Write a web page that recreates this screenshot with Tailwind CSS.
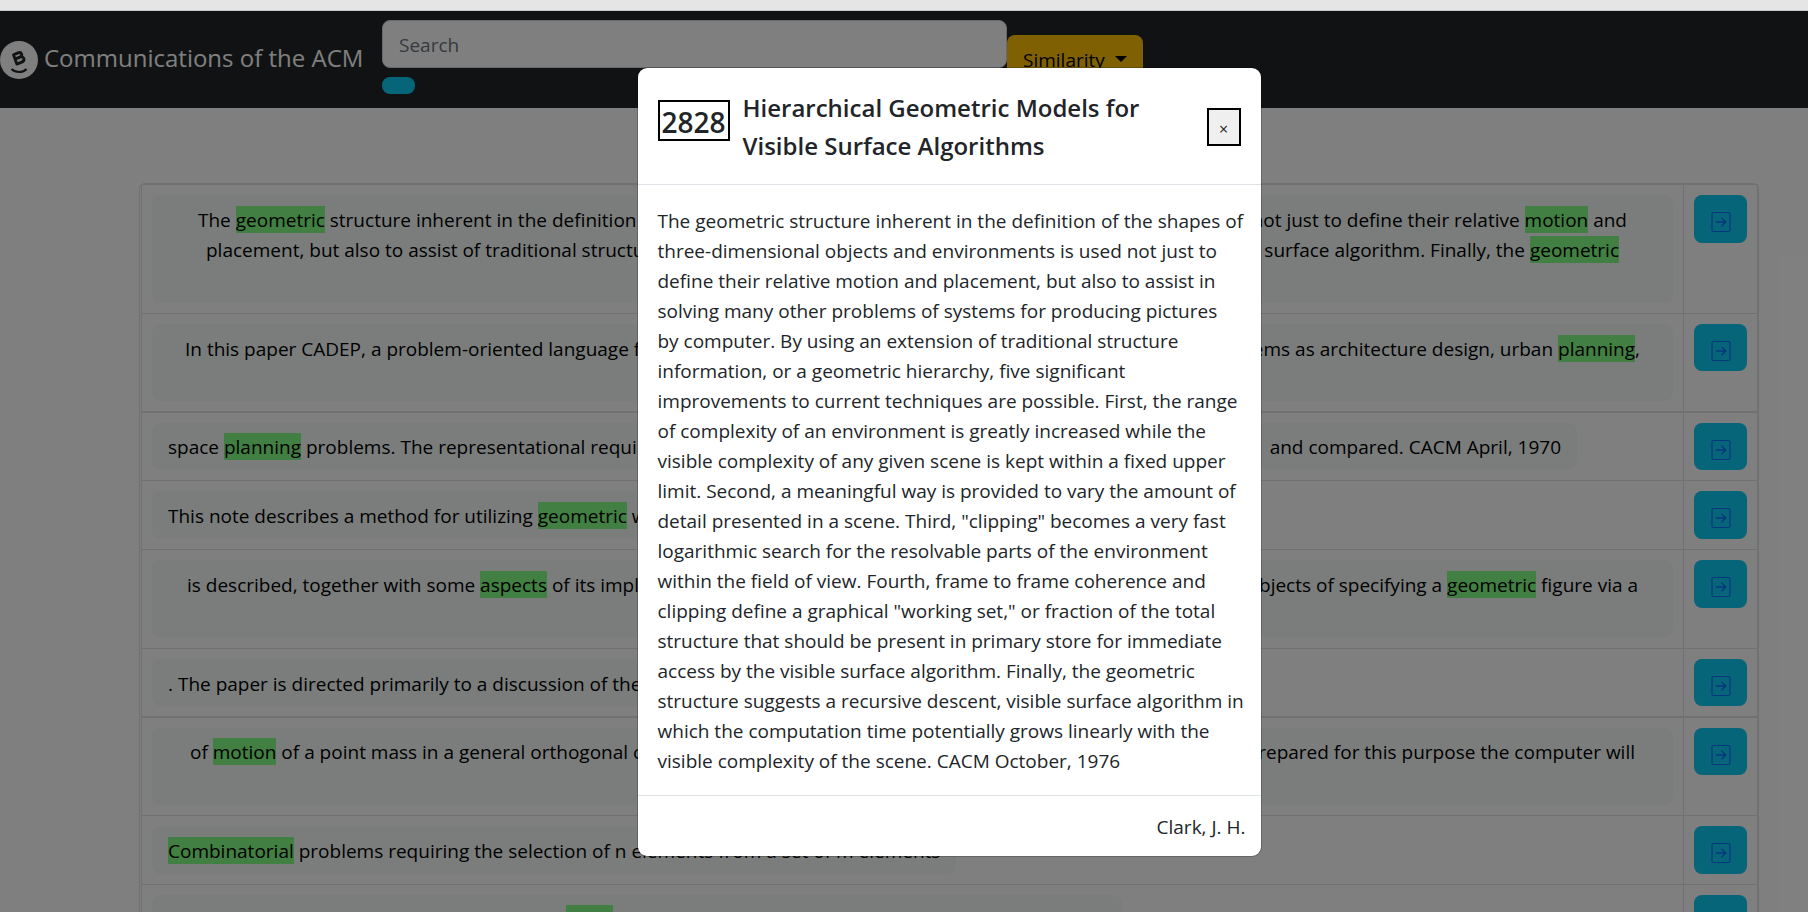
<!DOCTYPE html>
<html lang="en">
<head>
<meta charset="utf-8">
<title>Communications of the ACM</title>
<script src="https://cdn.jsdelivr.net/npm/@tailwindcss/browser@4"></script>
</head>
<body class="flex h-screen flex-col overflow-hidden bg-white font-['Open_Sans','Noto_Sans',sans-serif] text-[19px] leading-[30px] text-[#212529]">

<svg class="hidden" aria-hidden="true">
  <symbol id="open" viewBox="0 0 20 22">
    <rect x="1" y="1.5" width="18" height="19" rx="1.5" fill="none" stroke="#0d6efd" stroke-width="1.2"/>
    <path d="M5.5 11h9M11 7.2l3.8 3.8-3.8 3.8" fill="none" stroke="#0d6efd" stroke-width="1.4" stroke-linecap="round" stroke-linejoin="round"/>
  </symbol>
</svg>

<div class="h-[11px] shrink-0 border-b border-[#c3cbcb] bg-[#e5e5e5]"></div>

<div class="relative min-h-0 flex-1 overflow-hidden">
  <nav class="flex h-[97px] items-start bg-[#212529]">
    <a href="#" class="flex w-[382px] shrink-0 items-center gap-1.5 pt-[30px] text-[24px] leading-[34px] whitespace-nowrap text-white">
      <svg class="size-[38px] shrink-0" viewBox="0 0 38 38" aria-hidden="true">
        <circle cx="19" cy="19" r="19" fill="#fff"/>
        <g fill="none" stroke="#212529">
          <path d="M13.500 13.800l4.500-1.900c3.800-1.400 5.200 2.800 1.800 4.200l-4.300 1.800 4.300-1.800c4.300-1.600 5.800 3.400 2 5l-5 2z" stroke-width="2.800" stroke-linejoin="round"/>
          <path d="M11.500 28c4 4 11.500 4 15 0" stroke-width="2.200"/>
        </g>
      </svg>
      <span class="pb-1">Communications of the ACM</span>
    </a>
    <form class="flex min-w-0 items-start">
      <div class="flex flex-col items-start gap-[9px] pt-[9px]">
        <input type="search" aria-label="Search" placeholder="Search" class="h-12 w-[625px] rounded-[8px] border border-[#ced4da] bg-white px-4 pt-0.5 placeholder:text-[#6c757d]">
        <button type="submit" aria-label="Submit search" class="h-[17px] w-[33px] rounded-[8px] bg-[#0dcaf0]"></button>
      </div>
      <button type="button" class="mt-6 flex h-12 items-center gap-2.5 rounded-[8px] bg-[#ffc107] px-4 text-black">
        <span class="pt-0.5">Similarity</span>
        <svg class="h-[6px] w-3" viewBox="0 0 12 6" aria-hidden="true"><path d="M0 0h12L6 6z"/></svg>
      </button>
    </form>
  </nav>

  <main class="mt-[75px] mr-[49px] ml-[139px] rounded-[6px] border border-[#dee2e6] pl-px">
    <table class="w-full border-collapse text-black">
      <tbody class="[&_td]:border [&_td]:border-[#dee2e6] [&_td]:p-[10px] [&_td]:align-top [&_mark]:bg-[#82ff84] [&_mark]:pt-px [&_mark]:text-black">
        <tr>
          <td>
            <div class="h-[108px] rounded-[8px] bg-[#f5fbf9] pt-[10px] whitespace-nowrap">
              <div class="flex justify-between px-[46px]"><span>The <mark>geometric</mark> structure inherent in the definition</span><span>not just to define their relative <mark>motion</mark> and</span></div>
              <div class="flex justify-between px-[54px]"><span>placement, but also to assist of traditional structure</span><span>surface algorithm. Finally, the <mark>geometric</mark></span></div>
            </div>
          </td>
          <td class="w-[74px]"><button type="button" aria-label="Open document" class="flex h-12 w-[53px] items-center justify-center rounded-[8px] bg-[#0dcaf0] pt-1.5"><svg class="h-[22px] w-5"><use href="#open"/></svg></button></td>
        </tr>
        <tr>
          <td>
            <div class="flex h-[77px] justify-between rounded-[8px] bg-[#f5fbf9] px-[33px] pt-[10px] whitespace-nowrap"><span>In this paper CADEP, a problem-oriented language for</span><span>problems as architecture design, urban <mark>planning</mark>,</span></div>
          </td>
          <td><button type="button" aria-label="Open document" class="flex h-[47px] w-[53px] items-center justify-center rounded-[8px] bg-[#0dcaf0] pt-1.5"><svg class="h-[22px] w-5"><use href="#open"/></svg></button></td>
        </tr>
        <tr class="[&>td]:border-t-2!">
          <td>
            <div class="mr-24 flex h-[47px] justify-between rounded-[8px] bg-[#f5fbf9] px-4 pt-[9px] whitespace-nowrap"><span>space <mark>planning</mark> problems. The representational requirements</span><span>and compared. CACM April, 1970</span></div>
          </td>
          <td><button type="button" aria-label="Open document" class="flex h-[47px] w-[53px] items-center justify-center rounded-[8px] bg-[#0dcaf0] pt-1.5"><svg class="h-[22px] w-5"><use href="#open"/></svg></button></td>
        </tr>
        <tr>
          <td>
            <div class="h-12 w-fit rounded-[8px] bg-[#f5fbf9] px-4 pt-[10px] whitespace-nowrap">This note describes a method for utilizing <mark>geometric</mark> with</div>
          </td>
          <td><button type="button" aria-label="Open document" class="flex h-12 w-[53px] items-center justify-center rounded-[8px] bg-[#0dcaf0] pt-1.5"><svg class="h-[22px] w-5"><use href="#open"/></svg></button></td>
        </tr>
        <tr>
          <td>
            <div class="flex h-[78px] justify-between rounded-[8px] bg-[#f5fbf9] px-[35px] pt-[10px] whitespace-nowrap"><span>is described, together with some <mark>aspects</mark> of its implementation</span><span>objects of specifying a <mark>geometric</mark> figure via a</span></div>
          </td>
          <td><button type="button" aria-label="Open document" class="flex h-12 w-[53px] items-center justify-center rounded-[8px] bg-[#0dcaf0] pt-1.5"><svg class="h-[22px] w-5"><use href="#open"/></svg></button></td>
        </tr>
        <tr>
          <td>
            <div class="h-[47px] w-fit rounded-[8px] bg-[#f5fbf9] px-4 pt-[10px] whitespace-nowrap">. The paper is directed primarily to a discussion of the problem</div>
          </td>
          <td><button type="button" aria-label="Open document" class="flex h-[47px] w-[53px] items-center justify-center rounded-[8px] bg-[#0dcaf0] pt-1.5"><svg class="h-[22px] w-5"><use href="#open"/></svg></button></td>
        </tr>
        <tr class="[&>td]:border-t-2!">
          <td>
            <div class="flex h-[77px] justify-between rounded-[8px] bg-[#f5fbf9] px-[38px] pt-[9px] whitespace-nowrap"><span>of <mark>motion</mark> of a point mass in a general orthogonal coordinate</span><span>prepared for this purpose the computer will</span></div>
          </td>
          <td><button type="button" aria-label="Open document" class="flex h-[47px] w-[53px] items-center justify-center rounded-[8px] bg-[#0dcaf0] pt-1.5"><svg class="h-[22px] w-5"><use href="#open"/></svg></button></td>
        </tr>
        <tr>
          <td>
            <div class="h-12 w-fit rounded-[8px] bg-[#f5fbf9] px-4 pt-[10px] whitespace-nowrap"><mark>Combinatorial</mark> problems requiring the selection of n elements from a set of m elements</div>
          </td>
          <td><button type="button" aria-label="Open document" class="flex h-12 w-[53px] items-center justify-center rounded-[8px] bg-[#0dcaf0] pt-1.5"><svg class="h-[22px] w-5"><use href="#open"/></svg></button></td>
        </tr>
        <tr>
          <td>
            <div class="h-12 w-[970px] rounded-[8px] bg-[#f5fbf9] pt-[10px] pl-[414px]"><mark class="block h-7 w-[47px]"></mark></div>
          </td>
          <td><button type="button" aria-label="Open document" class="flex h-12 w-[53px] items-center justify-center rounded-[8px] bg-[#0dcaf0] pt-1.5"><svg class="h-[22px] w-5"><use href="#open"/></svg></button></td>
        </tr>
      </tbody>
    </table>
  </main>

  <!-- Backdrop and dialog -->
  <div class="absolute inset-0 flex items-start justify-center bg-black/50 pt-14 pl-[90px]">
    <section role="dialog" aria-modal="true" aria-labelledby="doc-title" class="w-full max-w-[625px] rounded-[10px] border border-black/20 bg-white bg-clip-padding">
      <header class="flex items-start border-b border-[#dee2e6] px-5 pt-[21px] pb-[19px]">
        <div class="mt-[11px] mr-[13px] flex h-[41px] w-[72px] shrink-0 items-center justify-center border-2 border-black pt-0.5 text-[28px] font-semibold">2828</div>
        <h1 id="doc-title" class="flex-1 text-[24px] leading-[38px] font-semibold">Hierarchical Geometric Models for<br>Visible Surface Algorithms</h1>
        <button type="button" aria-label="Close" class="flex h-[38px] w-[34px] items-center justify-center self-center border-2 border-black bg-[#efefef] pt-1 text-[16px]">×</button>
      </header>
      <p class="px-5 pt-[21px] pb-[19px] whitespace-nowrap">The geometric structure inherent in the definition of the shapes of<br>three-dimensional objects and environments is used not just to<br>define their relative motion and placement, but also to assist in<br>solving many other problems of systems for producing pictures<br>by computer. By using an extension of traditional structure<br>information, or a geometric hierarchy, five significant<br>improvements to current techniques are possible. First, the range<br>of complexity of an environment is greatly increased while the<br>visible complexity of any given scene is kept within a fixed upper<br>limit. Second, a meaningful way is provided to vary the amount of<br>detail presented in a scene. Third, "clipping" becomes a very fast<br>logarithmic search for the resolvable parts of the environment<br>within the field of view. Fourth, frame to frame coherence and<br>clipping define a graphical "working set," or fraction of the total<br>structure that should be present in primary store for immediate<br>access by the visible surface algorithm. Finally, the geometric<br>structure suggests a recursive descent, visible surface algorithm in<br>which the computation time potentially grows linearly with the<br>visible complexity of the scene. CACM October, 1976</p>
      <footer class="border-t border-[#dee2e6] px-[15px] pt-4 pb-3.5 text-right">Clark, J. H.</footer>
    </section>
  </div>
</div>
</body>
</html>
